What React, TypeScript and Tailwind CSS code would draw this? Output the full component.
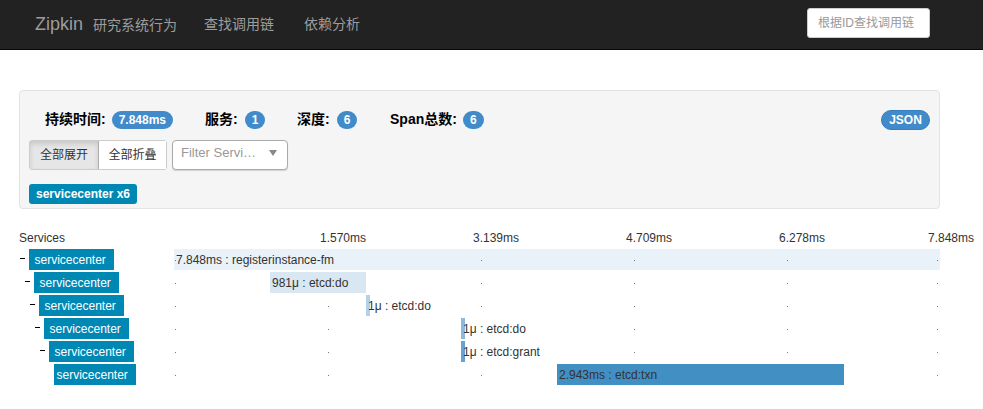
import React from 'react';

const FONT = 'font-["Liberation_Sans","Noto_Sans_CJK_SC",sans-serif]';

const ticks = [
  { label: '1.570ms', cls: 'w-[192px]' },
  { label: '3.139ms', cls: 'w-[153px]' },
  { label: '4.709ms', cls: 'w-[153px]' },
  { label: '6.278ms', cls: 'w-[153px]' },
  { label: '7.848ms', cls: 'w-[149px]' },
];

// offsets inside the timeline, measured from its left edge
const dots = [1, 154, 307, 460, 613, 763];

const spans = [
  { left: 0, width: 766, name: '7.848ms : registerinstance-fm', bar: 'bg-[#e9f2f9]', indent: 'ml-px', tag: 'w-[85px] pl-[5.5px]', hide: [154] },
  { left: 96, width: 96, name: '981μ : etcd:do', bar: 'bg-[#d8e7f2]', indent: 'ml-[6px]', tag: 'w-[85px] pl-[5.5px]', hide: [154] },
  { left: 192, width: 4, name: '1μ : etcd:do', bar: 'bg-[#b3d1e8]', indent: 'ml-[11px]', tag: 'w-[85px] pl-[5.5px]', hide: [] },
  { left: 287, width: 4, name: '1μ : etcd:do', bar: 'bg-[#8cb9dc]', indent: 'ml-[16px]', tag: 'w-[85px] pl-[5.5px]', hide: [307] },
  { left: 287, width: 4, name: '1μ : etcd:grant', bar: 'bg-[#67a2d0]', indent: 'ml-[21px]', tag: 'w-[85px] pl-[5.5px]', hide: [307] },
  { left: 383, width: 287, name: '2.943ms : etcd:txn', bar: 'bg-[#418fc3]', indent: 'ml-[35px]', tag: 'w-[82px] pl-[2.5px]', hide: [460, 613], leaf: true },
];

function Badge({ children }: { children: React.ReactNode }) {
  return (
    <span className="inline-flex h-[18px] items-center justify-center rounded-full bg-[#428bca] px-[7px] text-xs font-bold text-white">
      {children}
    </span>
  );
}

function Stat({ label, value, cls }: { label: string; value: string; cls: string }) {
  return (
    <div className={`flex items-center ${cls}`}>
      <span className="mb-[2px] text-sm font-bold text-black">{label}</span>
      <Badge>{value}</Badge>
    </div>
  );
}

export default function App() {
  return (
    <div className={`${FONT} min-h-[409px] bg-white text-[#333]`}>
      {/* Navbar */}
      <nav className="flex h-[50px] items-center border-b border-[#080808] bg-[#222] pl-[35px] pr-[53px] text-sm text-[#9d9d9d]">
        <span className="mb-[2px] w-[58px] text-lg leading-none">Zipkin</span>
        <span className="w-[111px]">研究系统行为</span>
        <span className="mb-[2px] w-[100px]">查找调用链</span>
        <span className="mb-[2px]">依赖分析</span>
        <div className="mb-[3px] ml-auto flex h-[30px] w-[123px] items-center rounded-[3px] border border-[#ccc] bg-white pl-[10px] text-xs text-[#999]">
          根据ID查找调用链
        </div>
      </nav>

      {/* Summary */}
      <div className="ml-[19px] mt-[40px] h-[119px] w-[921px] rounded border border-[#e3e3e3] bg-[#f5f5f5] px-[9px] pt-[19px]">
        <div className="flex h-[20px] items-center pl-[16px]">
          <Stat label="持续时间:" value="7.848ms" cls="w-[160px] gap-[6px]" />
          <Stat label="服务:" value="1" cls="w-[92px] gap-[7px]" />
          <Stat label="深度:" value="6" cls="w-[93px] gap-[7px]" />
          <Stat label="Span总数:" value="6" cls="gap-[6px]" />
          <span className="ml-auto inline-flex h-[20px] w-[49px] items-center justify-center rounded-full border border-[#357ebd] bg-[#428bca] text-xs font-bold text-white">
            JSON
          </span>
        </div>
        <div className="mt-[10px] flex h-[30px] text-xs">
          <div className="flex w-[138px] rounded-[3px] border border-[#ccc]">
            <span className="flex w-[69px] items-center justify-center border-r border-[#adadad] bg-[#e6e6e6] shadow-[inset_0_3px_5px_rgba(0,0,0,0.125)]">全部展开</span>
            <span className="flex flex-1 items-center justify-center bg-white">全部折叠</span>
          </div>
          <div className="ml-[5px] flex w-[116px] items-center justify-between rounded-[4px] border border-[#aaa] bg-white pl-[8px] pr-[10px] text-[13px] text-[#999] shadow-[0_1px_1px_rgba(0,0,0,0.15)]">
            <span className="mb-[4px]">Filter Servi…</span>
            <span className="mb-[4px] h-0 w-0 border-x-[4px] border-t-[6px] border-x-transparent border-t-[#888]" />
          </div>
        </div>
        <div className="mt-[11px]">
          <span className="inline-flex h-[20px] w-[108px] items-center justify-center rounded-[3px] bg-[#0088b5] text-xs font-bold text-white">
            servicecenter x6
          </span>
        </div>
      </div>

      {/* Trace */}
      <div className="ml-[19px] mt-[20px] text-xs">
        <div className="flex h-[18px] items-center">
          <span className="w-[155px]">Services</span>
          {ticks.map((t) => (
            <span key={t.label} className={`${t.cls} text-right`}>{t.label}</span>
          ))}
        </div>
        <div className="mt-[2px] flex flex-col gap-[2px]">
          {spans.map((s) => (
            <div key={s.indent} className="flex h-[21px]">
              <div className="flex w-[155px] items-center">
                <div className={`${s.indent} flex items-center`}>
                  {!s.leaf && <span className="mb-[2px] mr-[4px] h-px w-[5px] bg-black" />}
                  <span className={`${s.tag} flex h-[21px] items-center bg-[#0088b5] text-white`}>servicecenter</span>
                </div>
              </div>
              <div className="relative w-[766px]">
                <div className={`absolute inset-y-0 ${s.bar}`} style={{ left: s.left, width: s.width }} />
                {dots.filter((d) => !s.hide.includes(d)).map((d) => (
                  <span key={d} className="absolute top-[11px] h-px w-px bg-[#777]" style={{ left: d }} />
                ))}
                <span className="absolute top-[3px] whitespace-nowrap" style={{ left: s.left + 2 }}>{s.name}</span>
              </div>
            </div>
          ))}
        </div>
      </div>
    </div>
  );
}
